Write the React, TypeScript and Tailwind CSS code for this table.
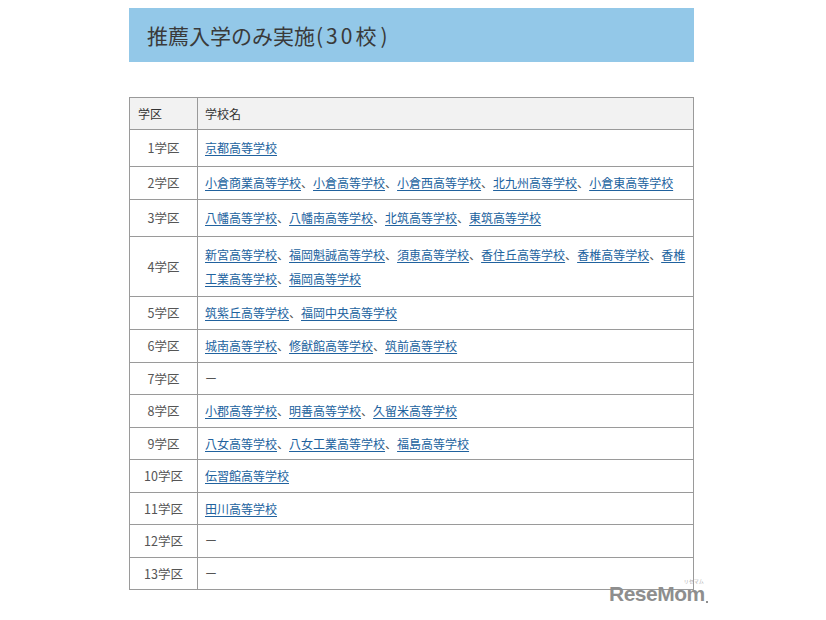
import React from "react";

interface Row {
  district: string;
  schools: string[];
  height: string;
}

const rows: Row[] = [
  { district: "1学区", schools: ["京都高等学校"], height: "h-[37px]" },
  {
    district: "2学区",
    schools: ["小倉商業高等学校", "小倉高等学校", "小倉西高等学校", "北九州高等学校", "小倉東高等学校"],
    height: "h-[33px]",
  },
  {
    district: "3学区",
    schools: ["八幡高等学校", "八幡南高等学校", "北筑高等学校", "東筑高等学校"],
    height: "h-[37px]",
  },
  {
    district: "4学区",
    schools: ["新宮高等学校", "福岡魁誠高等学校", "須恵高等学校", "香住丘高等学校", "香椎高等学校", "香椎工業高等学校", "福岡高等学校"],
    height: "h-[60px]",
  },
  { district: "5学区", schools: ["筑紫丘高等学校", "福岡中央高等学校"], height: "h-[33px]" },
  { district: "6学区", schools: ["城南高等学校", "修猷館高等学校", "筑前高等学校"], height: "h-[33px]" },
  { district: "7学区", schools: [], height: "h-[32px]" },
  { district: "8学区", schools: ["小郡高等学校", "明善高等学校", "久留米高等学校"], height: "h-[33px]" },
  { district: "9学区", schools: ["八女高等学校", "八女工業高等学校", "福島高等学校"], height: "h-[32px]" },
  { district: "10学区", schools: ["伝習館高等学校"], height: "h-[33px]" },
  { district: "11学区", schools: ["田川高等学校"], height: "h-[32px]" },
  { district: "12学区", schools: [], height: "h-[33px]" },
  { district: "13学区", schools: [], height: "h-[32px]" },
];

const font = "font-['Noto_Sans_CJK_JP','Noto_Sans',sans-serif]";

export default function App() {
  return (
    <div className={`w-[826px] h-[620px] bg-white ${font} relative`}>
      <div className="w-[565px] ml-[129px] pt-[8px]">
        {/* Title bar */}
        <div className="h-[54px] bg-[#93c8e8] flex items-center pl-[18px]">
          <h2 className="text-[21px] leading-none text-[#3a3a3a]">
            推薦入学のみ実施<span className="pl-[1px] tracking-[3px]">(30</span>校<span className="pl-[4px]">)</span>
          </h2>
        </div>

        {/* Schools table */}
        <table className="mt-[35px] w-full border-collapse text-[12px] leading-[24px]">
          <thead>
            <tr className="h-[32px] bg-[#f2f2f2]">
              <th className="w-[68px] border border-[#9a9a9a] text-left font-normal pl-[8px] text-[#333]">学区</th>
              <th className="border border-[#9a9a9a] text-left font-normal pl-[7px] text-[#333]">学校名</th>
            </tr>
          </thead>
          <tbody>
            {rows.map((row) => (
              <tr key={row.district} className={row.height}>
                <td className="border border-[#9a9a9a] text-center text-[#555] text-[12.5px]">{row.district}</td>
                <td className="border border-[#9a9a9a] pl-[7px] pr-[4px] text-[#555]">
                  {row.schools.length === 0
                    ? "ー"
                    : row.schools.map((s, i) => (
                        <React.Fragment key={s}>
                          <a href="#" className="text-[#21629e] underline underline-offset-[2px]">
                            {s}
                          </a>
                          {i < row.schools.length - 1 && "、"}
                        </React.Fragment>
                      ))}
                </td>
              </tr>
            ))}
          </tbody>
        </table>
      </div>

      {/* Logo */}
      <div className="absolute left-[609px] top-[583px] flex items-end">
        <span className="font-['Liberation_Sans',sans-serif] font-bold text-[21px] leading-none text-[#8e8e8e] tracking-[-0.5px]">
          ReseMom
        </span>
        <span className="w-[2px] h-[2px] bg-[#8e8e8e] mb-[1px] ml-[1px]" />
        <span className="absolute right-[4px] -top-[5px] text-[5px] text-[#aaa] leading-none">リセマム</span>
      </div>
    </div>
  );
}
